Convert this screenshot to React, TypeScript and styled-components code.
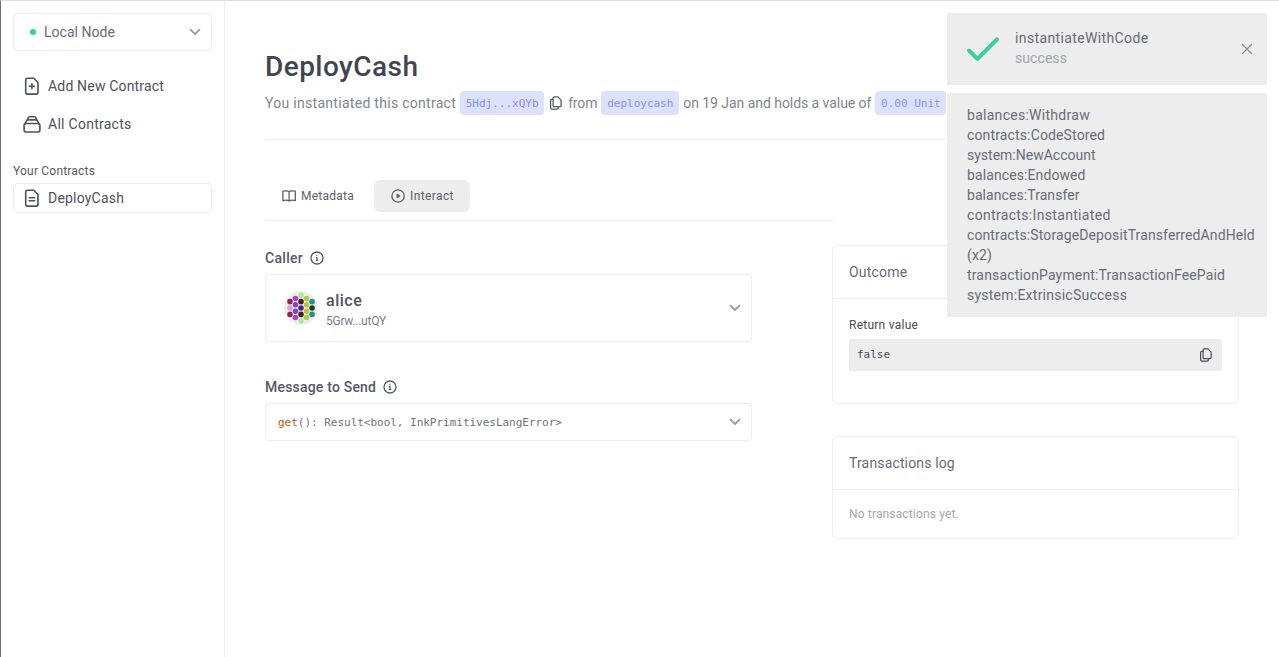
import React from 'react';
import styled, { createGlobalStyle } from 'styled-components';

const GlobalStyle = createGlobalStyle`
  * { box-sizing: border-box; }
  body {
    margin: 0;
    background: #fff;
    color: #4f535f;
    font-family: Roboto, "Liberation Sans", sans-serif;
    font-size: 14px;
    line-height: 20px;
    overflow: hidden;
  }
`;

const MONO = '"DejaVu Sans Mono", "Liberation Mono", monospace';
const LINE = '#ededed';

const Frame = styled.div`
  position: relative;
  display: flex;
  height: 657px;
  border-left: 1px solid #707070;
  border-top: 1px solid #dedede;
`;

const T = styled.span<{ $ls?: number }>`
  letter-spacing: ${(p) => p.$ls ?? 0}px;
  white-space: nowrap;
`;

const Icon = styled.svg<{ $w?: number }>`
  display: block;
  flex: none;
  fill: none;
  stroke: currentColor;
  stroke-width: ${(p) => p.$w ?? 1.4};
  stroke-linecap: round;
  stroke-linejoin: round;
`;

/* Sidebar */

const Sidebar = styled.aside`
  width: 224px;
  flex: none;
  padding: 12px;
  border-right: 1px solid ${LINE};
`;

const NodeSelect = styled.div`
  display: flex;
  align-items: center;
  height: 38px;
  padding: 0 10px 0 16px;
  border: 1px solid ${LINE};
  border-radius: 4px;
  color: #676d79;
`;

const Dot = styled.i`
  width: 6px;
  height: 6px;
  margin-right: 8px;
  border-radius: 50%;
  background: #34d399;
`;

const Chevron = styled(Icon)`
  margin-left: auto;
  color: #9a9da6;
`;

const Nav = styled.nav`
  display: grid;
  gap: 8px;
  margin: 20px 0 22px;
`;

const NavItem = styled.div<{ $boxed?: boolean }>`
  display: flex;
  align-items: center;
  height: 30px;
  gap: 6px;
  padding-left: ${(p) => (p.$boxed ? 8 : 9)}px;
  border: ${(p) => (p.$boxed ? `1px solid ${LINE}` : 'none')};
  border-radius: 5px;
  color: #4d515e;
`;

const NavHeading = styled.div`
  height: 22px;
  font-size: 12px;
  line-height: 20px;
  color: #565a67;
`;

/* Main column */

const Main = styled.main`
  flex: 1;
  min-width: 0;
  padding: 48px 40px 0;
`;

const Header = styled.header`
  height: 91px;
  border-bottom: 1px solid ${LINE};
`;

const Title = styled.h1`
  margin: 0 0 6px;
  font-size: 28px;
  font-weight: 500;
  line-height: 36px;
  color: #3f4652;
`;

const Summary = styled.div`
  display: flex;
  align-items: center;
  height: 24px;
  color: #808591;
`;

const Chip = styled.span<{ $width: number }>`
  width: ${(p) => p.$width}px;
  height: 24px;
  margin: 0 4px;
  border-radius: 4px;
  background: #dce2fc;
  color: #8b8ff5;
  font: 11px/25px ${MONO};
  text-align: center;
  white-space: nowrap;
`;

const CopyIcon = styled(Icon)`
  margin: 0 5px 0 1px;
  color: #555966;
`;

const Columns = styled.div`
  display: flex;
  padding-top: 40px;
`;

const Left = styled.section`
  width: 567px;
`;

const Tabs = styled.div`
  display: flex;
  gap: 4px;
  width: 568px;
  height: 41px;
  margin-bottom: 27px;
  border-bottom: 1px solid ${LINE};
`;

const Tab = styled.div<{ $active?: boolean; $width: number }>`
  display: flex;
  align-items: center;
  gap: 4px;
  width: ${(p) => p.$width}px;
  height: 32px;
  padding-left: 17px;
  border-radius: 6px;
  background: ${(p) => (p.$active ? LINE : 'transparent')};
  color: #5b5f6b;
  font-size: 12px;
  line-height: 16px;
`;

const Label = styled.div`
  display: flex;
  align-items: center;
  gap: 6px;
  height: 20px;
  margin-bottom: 6px;
  font-weight: 500;
  color: #555a67;
`;

const Select = styled.div<{ $height: number; $pad: number }>`
  display: flex;
  align-items: center;
  width: 487px;
  height: ${(p) => p.$height}px;
  margin-bottom: 35px;
  padding: 0 10px 0 ${(p) => p.$pad}px;
  border: 1px solid ${LINE};
  border-radius: 4px;
`;

const Account = styled.div`
  display: flex;
  flex-direction: column;
  padding-top: 5px;
  margin-left: 8px;
`;

const AccountName = styled(T)`
  font-size: 16px;
  font-weight: 500;
  color: #4e5360;
`;

const Address = styled(T)`
  font-size: 12px;
  line-height: 20px;
  color: #7b808b;
`;

const Signature = styled.code`
  margin-top: 1px;
  font: 11px/20px ${MONO};
  color: #6d727f;
  letter-spacing: -0.02px;
  white-space: pre;
`;

const Keyword = styled.span`
  color: #bb590d;
`;

const Right = styled.section`
  width: 407px;
  padding-top: 65px;
`;

const Card = styled.div<{ $height: number }>`
  height: ${(p) => p.$height}px;
  margin-bottom: 32px;
  border: 1px solid ${LINE};
  border-radius: 6px;
`;

const CardHeader = styled.div`
  height: 53px;
  padding-left: 16px;
  border-bottom: 1px solid ${LINE};
  line-height: 52px;
  color: #676c79;
`;

const CardBody = styled.div`
  padding: 16px;
  font-size: 12px;
  color: #484b53;
`;

const Muted = styled(T)`
  display: block;
  line-height: 17px;
  color: #a5a8b1;
`;

const Result = styled.div`
  display: flex;
  align-items: center;
  justify-content: space-between;
  height: 32px;
  margin-top: 4px;
  padding: 0 9px 0 8px;
  border-radius: 2px;
  background: ${LINE};
  color: #454e5c;
  font: 11px/32px ${MONO};
`;

/* Notifications overlay the page in the top right corner */

const Notifications = styled.div`
  position: absolute;
  top: 12px;
  right: 12px;
  display: grid;
  gap: 8px;
  width: 320px;
  color: #686c79;
`;

const Toast = styled.div`
  display: flex;
  align-items: center;
  height: 72px;
  padding: 0 14px 0 19px;
  background: ${LINE};
`;

const ToastText = styled.div`
  display: flex;
  flex: 1;
  flex-direction: column;
  margin: 0 0 2px 15px;
`;

const Status = styled(T)`
  color: #a0a3ad;
`;

const Events = styled.ul`
  margin: 0;
  padding: 12px 10px 12px 20px;
  list-style: none;
  background: ${LINE};
`;

const Down = () => (
  <Chevron width="12" height="8" viewBox="0 0 12 8" $w={1.8}>
    <path d="M1.5 1.7 6 6l4.5-4.3" />
  </Chevron>
);

const FileOutline = 'M5.5 1.2h6.2l4.3 4.3v9.8a1.8 1.8 0 0 1-1.8 1.8H5.5a1.8 1.8 0 0 1-1.8-1.8V3a1.8 1.8 0 0 1 1.8-1.8Z';

const AddFile = () => (
  <Icon width="20" height="18" viewBox="0 0 20 18" $w={1.6}>
    <path d={FileOutline} />
    <path d="M9.9 6.8v5M7.4 9.3h5" />
  </Icon>
);

const TextFile = () => (
  <Icon width="20" height="18" viewBox="0 0 20 18" $w={1.6}>
    <path d={FileOutline} />
    <path d="M7.2 8.8h5.4M7.2 11.8h5.4" />
  </Icon>
);

const Stack = () => (
  <Icon width="20" height="18" viewBox="0 0 20 18" $w={1.6}>
    <rect x="2.1" y="8.5" width="15.8" height="8.5" rx="1.9" />
    <path d="M3 8.8 4.700 5.600a1.400 1.400 0 0 1 1.200-.7h8.200a1.400 1.400 0 0 1 1.200.7L17 8.800M5.300 4.900l.8-2.100a1.500 1.500 0 0 1 1.400-1h5a1.500 1.500 0 0 1 1.400 1l.8 2.100" />
  </Icon>
);

const copyPaths = (
  <>
    <path d="M5.4.9h3.500l3.200 3.200v5.300a1.300 1.300 0 0 1-1.300 1.300H5.400a1.300 1.300 0 0 1-1.300-1.300V2.200A1.300 1.300 0 0 1 5.400.9Z" />
    <path d="M3.900 3.300h-1A1.300 1.300 0 0 0 1.600 4.600v7.200a1.300 1.300 0 0 0 1.300 1.300h5.200a1.300 1.300 0 0 0 1.300-1.300v-.9" />
  </>
);

const Info = () => (
  <Icon width="16" height="16" viewBox="0 0 16 16" $w={1.3}>
    <circle cx="8" cy="8" r="6" />
    <path d="M7.3 7.6H8v2.8M7.1 10.5h1.8M7.9 5.2v.1" strokeWidth="1.2" />
  </Icon>
);

const dotColumns: string[][] = [
  ['#8f2558', '#df9fdf', '#8f2558'],
  ['#b83ccf', '#8340c6', '#8340c6', '#b83ccf'],
  ['#a4e89c', '#3f2610', '#3f25a8', '#3f2610', '#a4e89c'],
  ['#a6cc48', '#b9c63c', '#b9c63c', '#a6cc48'],
  ['#258f8f', '#22400f', '#258f8f'],
];

const Identicon = () => (
  <svg width="34" height="34" viewBox="0 0 64 64">
    <circle cx="32" cy="32" r="32" fill="#eee" />
    {dotColumns.map((column, x) =>
      column.map((fill, y) => (
        <circle
          key={`${x}-${y}`}
          cx={32 + (x - 2) * 10.4}
          cy={32 + (y - (column.length - 1) / 2) * 12}
          r="5.2"
          fill={fill}
        />
      )),
    )}
  </svg>
);

const events: [string, number][] = [
  ['balances:Withdraw', 0.28],
  ['contracts:CodeStored', 0.14],
  ['system:NewAccount', 0],
  ['balances:Endowed', 0.1],
  ['balances:Transfer', 0.07],
  ['contracts:Instantiated', 0.33],
  ['contracts:StorageDepositTransferredAndHeld', 0.11],
  ['(x2)', 0.1],
  ['transactionPayment:TransactionFeePaid', 0.16],
  ['system:ExtrinsicSuccess', 0.24],
];

export default function App() {
  return (
    <Frame>
      <GlobalStyle />
      <Sidebar>
        <NodeSelect>
          <Dot />
          <T $ls={0.03}>Local Node</T>
          <Down />
        </NodeSelect>
        <Nav>
          <NavItem><AddFile /><T $ls={0.18}>Add New Contract</T></NavItem>
          <NavItem><Stack /><T $ls={0.27}>All Contracts</T></NavItem>
        </Nav>
        <NavHeading><T $ls={0.2}>Your Contracts</T></NavHeading>
        <NavItem $boxed><TextFile /><T $ls={0.2}>DeployCash</T></NavItem>
      </Sidebar>

      <Main>
        <Header>
          <Title><T $ls={0.45}>DeployCash</T></Title>
          <Summary>
            <T $ls={0.29}>You instantiated this contract</T>
            <Chip $width={84}>5Hdj...xQYb</Chip>
            <CopyIcon width="14" height="14" viewBox="0 0 14 14" $w={1.3}>{copyPaths}</CopyIcon>
            <T $ls={-0.15}>from</T>
            <Chip $width={78}>deploycash</Chip>
            <T $ls={-0.05}>on 19 Jan and holds a value of</T>
            <Chip $width={71}>0.00 Unit</Chip>
          </Summary>
        </Header>

        <Columns>
          <Left>
            <Tabs>
              <Tab $width={105}>
                <Icon width="15" height="14" viewBox="0 0 15 14" $w={1.3}>
                  <path d="M7.1 2.6C6.200 2 5.200 1.800 3.900 1.800c-1.200 0-2.200.1-3 .4v9.400c.8-.3 1.800-.4 3-.4 1.300 0 2.300.2 3.200.8.9-.6 1.900-.8 3.200-.8 1.200 0 2.200.1 3 .4V2.200c-.8-.3-1.800-.4-3-.4-1.300 0-2.300.2-3.200.8Zm0 0v9.400" />
                </Icon>
                <T $ls={0.25}>Metadata</T>
              </Tab>
              <Tab $active $width={96}>
                <Icon width="15" height="14" viewBox="0 0 15 14" $w={1.3}>
                  <circle cx="7.100" cy="7" r="6.200" />
                  <path d="M6.200 5.400v3.200L8.700 7Z" />
                </Icon>
                <T $ls={0.4}>Interact</T>
              </Tab>
            </Tabs>
            <Label><T $ls={0.3}>Caller</T><Info /></Label>
            <Select $height={68} $pad={18}>
              <Identicon />
              <Account>
                <AccountName $ls={0.5}>alice</AccountName>
                <Address $ls={-0.25}>5Grw...utQY</Address>
              </Account>
              <Down />
            </Select>
            <Label><T $ls={0.2}>Message to Send</T><Info /></Label>
            <Select $height={38} $pad={12}>
              <Signature><Keyword>get</Keyword>(): Result&lt;bool, InkPrimitivesLangError&gt;</Signature>
              <Down />
            </Select>
          </Left>

          <Right>
            <Card $height={159}>
              <CardHeader><T $ls={0.2}>Outcome</T></CardHeader>
              <CardBody>
                <T $ls={0.25}>Return value</T>
                <Result>
                  false
                  <Icon width="14" height="14" viewBox="0 0 14 14" $w={1.2}>{copyPaths}</Icon>
                </Result>
              </CardBody>
            </Card>
            <Card $height={103}>
              <CardHeader><T $ls={0.15}>Transactions log</T></CardHeader>
              <CardBody><Muted $ls={0.15}>No transactions yet.</Muted></CardBody>
            </Card>
          </Right>
        </Columns>
      </Main>

      <Notifications>
        <Toast>
          <Icon width="34" height="26" viewBox="0 0 34 26" $w={4} color="#34d399">
            <path d="m3 14.500 8.400 8.400L31 3.300" />
          </Icon>
          <ToastText>
            <T $ls={0.37}>instantiateWithCode</T>
            <Status $ls={0.07}>success</Status>
          </ToastText>
          <Icon width="12" height="12" viewBox="0 0 12 12" $w={1.2} color="#8b8e98">
            <path d="m1.500 1.500 9 9m0-9-9 9" />
          </Icon>
        </Toast>
        <Events>
          {events.map(([name, spacing]) => (
            <li key={name}><T $ls={spacing}>{name}</T></li>
          ))}
        </Events>
      </Notifications>
    </Frame>
  );
}
